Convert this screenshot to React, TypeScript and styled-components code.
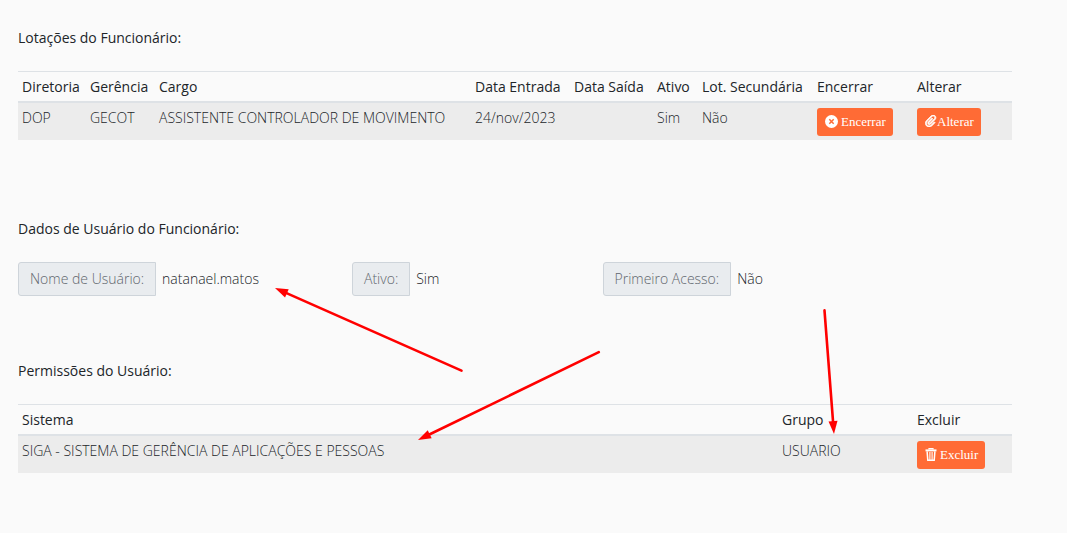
import React from "react";
import styled, { createGlobalStyle } from "styled-components";
import { ImAttachment } from "react-icons/im";

const GlobalStyle = createGlobalStyle`
  * { box-sizing: border-box; }
  body {
    margin: 0;
    background: #fafafa;
    color: #212529;
    font: 300 14px/20px "Open Sans", "Noto Sans", sans-serif;
  }
`;

const Page = styled.main`
  position: relative;
  display: flex;
  flex-direction: column;
  gap: 65px;
  padding: 28px 55px 60px 18px;
`;

const Section = styled.section<{ $spaced?: boolean }>`
  display: flex;
  flex-direction: column;
  gap: 23px;
  padding-bottom: ${(p) => (p.$spaced ? "14px" : "0")};
`;

const Title = styled.h2`
  margin: 0;
  font-size: 14px;
  font-weight: 400;
  line-height: 20px;
`;

const Table = styled.table`
  width: 100%;
  table-layout: fixed;
  border-collapse: separate;
  border-spacing: 0;
  white-space: nowrap;
`;

const Col = styled.col<{ $width?: number }>`
  width: ${(p) => (p.$width ? `${p.$width}px` : "auto")};
`;

const HeadCell = styled.th`
  padding: 5px 4px 4px;
  border-top: 1px solid #dee2e6;
  border-bottom: 2px solid #dee2e6;
  font-weight: 400;
  text-align: left;
`;

const Cell = styled.td`
  padding: 5px 4px 4px;
  background: #ececec;
  vertical-align: top;
`;

const ActionButton = styled.button<{ $gap: number }>`
  display: flex;
  align-items: center;
  gap: ${(p) => p.$gap}px;
  height: 28px;
  padding: 0 7px 0 8px;
  border: 0;
  border-radius: 3px;
  background: #ff6b35;
  color: #fff;
  font: 13px/16px "Liberation Serif", serif;
  cursor: pointer;

  svg { flex: none; margin-bottom: 2px; }
`;

const Fields = styled.dl`
  display: grid;
  grid-template-columns: 4fr 3fr 5fr;
  margin: 0 -8px 0 0;
`;

const Field = styled.div`
  display: flex;
  height: 34px;
  line-height: 32px;
`;

const FieldLabel = styled.dt`
  padding: 0 11px;
  border: 1px solid #ced4da;
  border-radius: 3px 0 0 3px;
  background: #e9ecef;
  color: #5f666d;
`;

const FieldValue = styled.dd`
  margin: 0;
  padding: 1px 6px;
  color: #212529;
`;

const Arrows = styled.svg`
  position: absolute;
  top: 0;
  left: 0;
  pointer-events: none;
`;

const CloseIcon = () => (
  <svg width="13" height="13" viewBox="0 0 13 13" aria-hidden="true">
    <circle cx="6.5" cy="6.5" r="6.5" fill="#fff" />
    <path d="M4.3 4.3l4.4 4.4M8.7 4.3l-4.4 4.4" stroke="#ff6b35" strokeWidth="1.5" />
  </svg>
);

const BinIcon = () => (
  <svg width="12" height="13" viewBox="0 0 12 13" fill="none" stroke="#fff" aria-hidden="true">
    <path d="M4 1.6V.6h4v1" strokeWidth="1.2" />
    <path d="M.5 2.4h11" strokeWidth="2" />
    <path d="M2.1 3.4l.7 8.8h6.4l.7-8.8" strokeWidth="1.5" />
    <path d="M4.9 4v8M7.1 4v8" strokeWidth="1.1" />
  </svg>
);

const assignmentColumns = [
  { name: "Diretoria", width: 68 },
  { name: "Gerência", width: 69 },
  { name: "Cargo" },
  { name: "Data Entrada", width: 99 },
  { name: "Data Saída", width: 83 },
  { name: "Ativo", width: 45 },
  { name: "Lot. Secundária", width: 115 },
  { name: "Encerrar", width: 100 },
  { name: "Alterar", width: 99 },
];

const permissionColumns = [
  { name: "Sistema" },
  { name: "Grupo", width: 135 },
  { name: "Excluir", width: 99 },
];

const fields = [
  ["Nome de Usuário:", "natanael.matos"],
  ["Ativo:", "Sim"],
  ["Primeiro Acesso:", "Não"],
];

const arrows = [
  { x: 275, y: 288, length: 204, angle: 23.9 },
  { x: 418, y: 440, length: 201, angle: -25.9 },
  { x: 834, y: 434, length: 124, angle: -94.4 },
];

type Column = { name: string; width?: number };

const DataTable = ({ columns, children }: { columns: Column[]; children: React.ReactNode }) => (
  <Table>
    <colgroup>
      {columns.map((c) => <Col key={c.name} $width={c.width} />)}
    </colgroup>
    <thead>
      <tr>{columns.map((c) => <HeadCell key={c.name} scope="col">{c.name}</HeadCell>)}</tr>
    </thead>
    <tbody>
      <tr>{children}</tr>
    </tbody>
  </Table>
);

export default function App() {
  return (
    <>
      <GlobalStyle />
      <Page>
        <Section $spaced>
          <Title>Lotações do Funcionário:</Title>
          <DataTable columns={assignmentColumns}>
            <Cell>DOP</Cell>
            <Cell>GECOT</Cell>
            <Cell>ASSISTENTE CONTROLADOR DE MOVIMENTO</Cell>
            <Cell>24/nov/2023</Cell>
            <Cell />
            <Cell>Sim</Cell>
            <Cell>Não</Cell>
            <Cell>
              <ActionButton type="button" $gap={3}><CloseIcon /><span>Encerrar</span></ActionButton>
            </Cell>
            <Cell>
              <ActionButton type="button" $gap={0}><ImAttachment size={12} stroke="#fff" strokeWidth={1} /><span>Alterar</span></ActionButton>
            </Cell>
          </DataTable>
        </Section>
        <Section>
          <Title>Dados de Usuário do Funcionário:</Title>
          <Fields>
            {fields.map(([label, value]) => (
              <Field key={label}>
                <FieldLabel>{label}</FieldLabel>
                <FieldValue>{value}</FieldValue>
              </Field>
            ))}
          </Fields>
        </Section>
        <Section>
          <Title>Permissões do Usuário:</Title>
          <DataTable columns={permissionColumns}>
            <Cell>SIGA - SISTEMA DE GERÊNCIA DE APLICAÇÕES E PESSOAS</Cell>
            <Cell>USUARIO</Cell>
            <Cell>
              <ActionButton type="button" $gap={3}><BinIcon /><span>Excluir</span></ActionButton>
            </Cell>
          </DataTable>
        </Section>
        <Arrows width="860" height="460" aria-hidden="true">
          {arrows.map((a) => (
            <g key={a.x} transform={`translate(${a.x} ${a.y}) rotate(${a.angle})`} fill="#f00">
              <path d="M0 0L13-4.5V4.5Z" />
              <path d={`M12 0H${a.length}`} stroke="#f00" strokeWidth="2.6" strokeLinecap="round" />
            </g>
          ))}
        </Arrows>
      </Page>
    </>
  );
}
